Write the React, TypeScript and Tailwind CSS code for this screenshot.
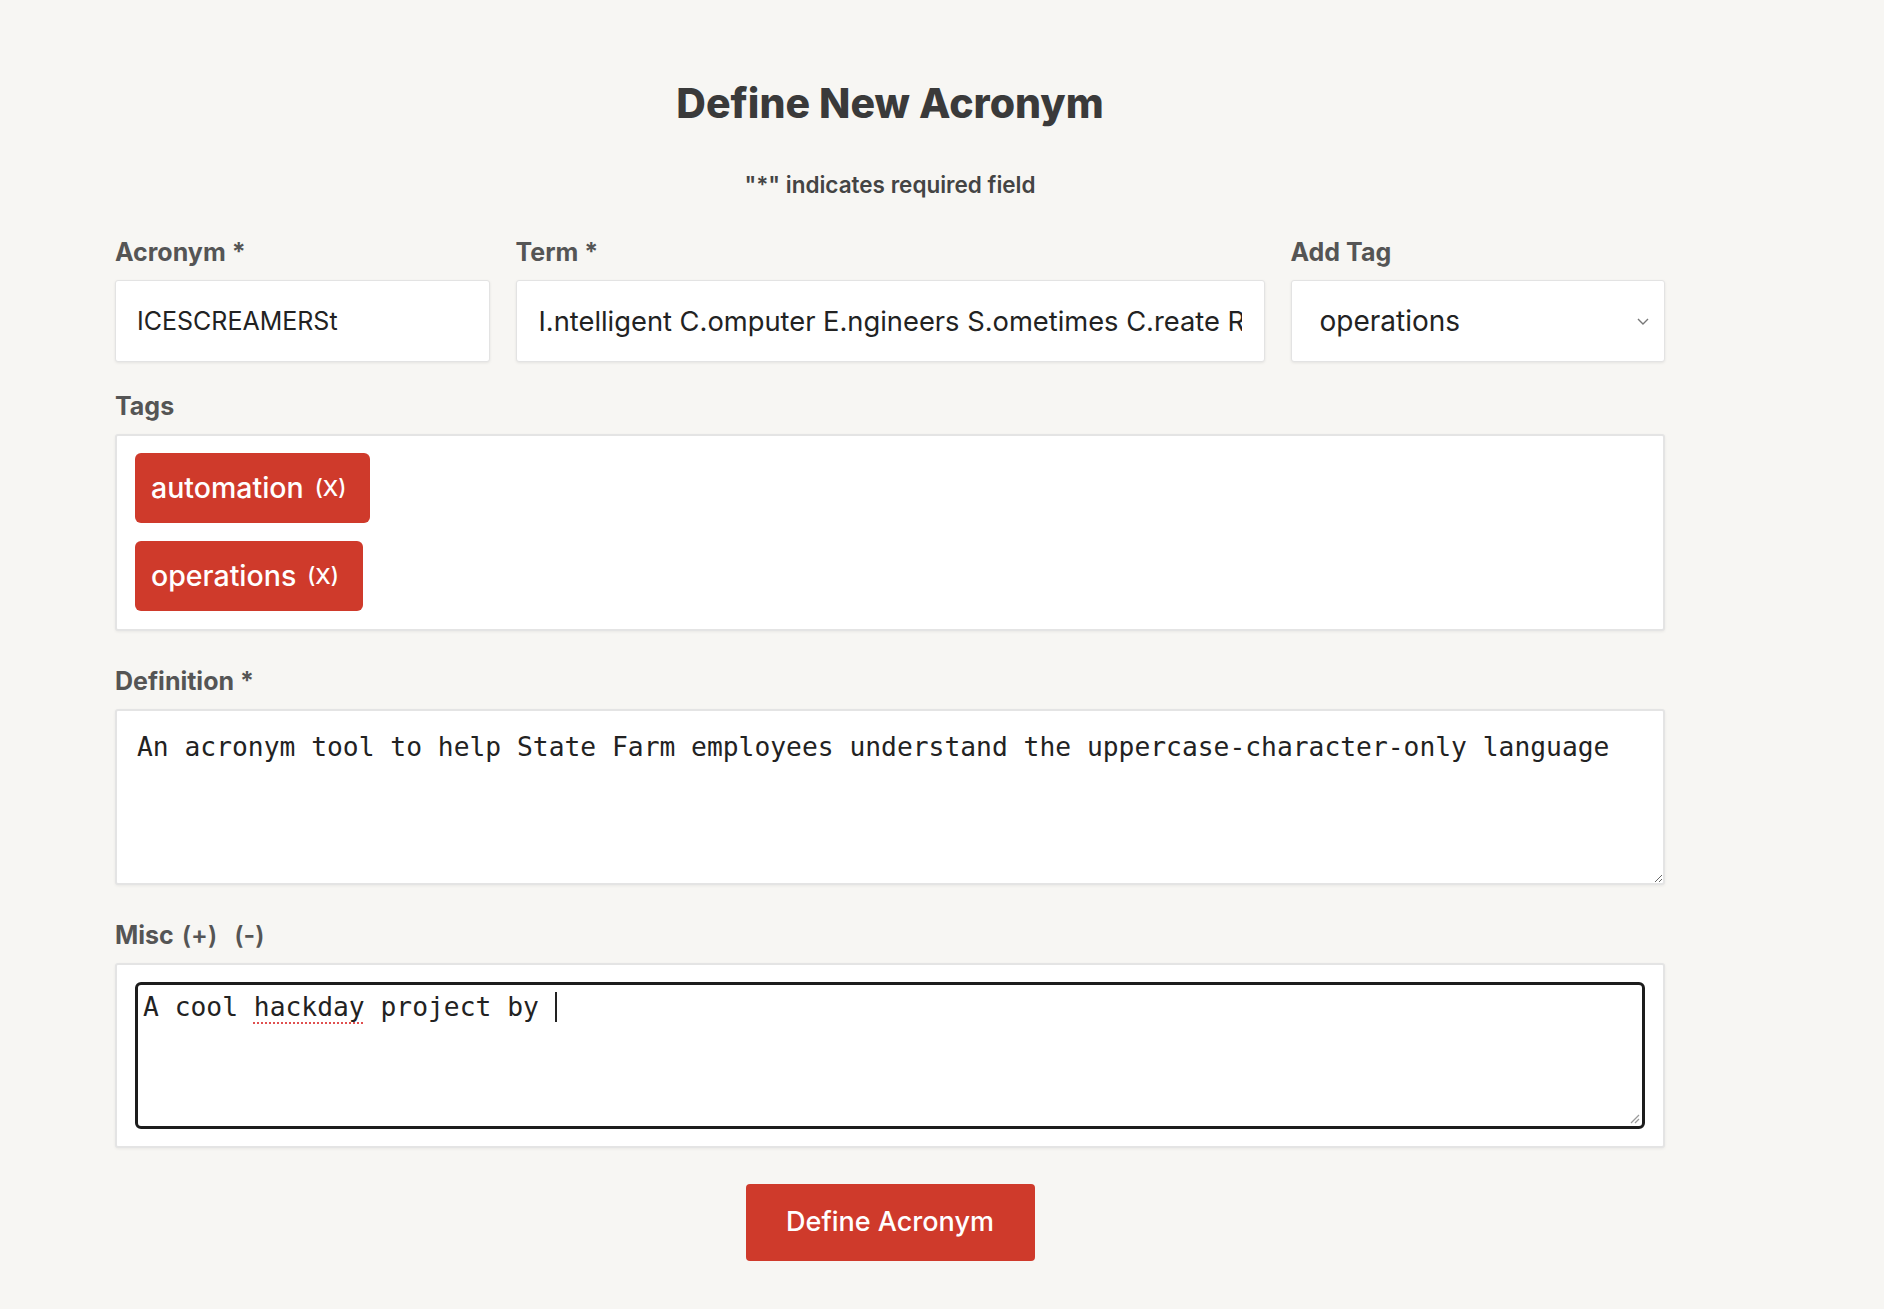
import { useState } from 'react';

const sans = { fontFamily: 'Inter, "Noto Sans", sans-serif' };
const mono = { fontFamily: '"DejaVu Sans Mono", monospace' };

function Label({ children }: { children: React.ReactNode }) {
  return (
    <div className="mb-[14px] text-[25px] leading-[28px] font-bold text-[#555555]">{children}</div>
  );
}

function Chip({ name }: { name: string }) {
  return (
    <div className="flex w-fit items-center rounded-[6px] bg-[#cf3a2b] h-[70px] pl-[16px] pr-[24px] text-white">
      <span className="text-[28.5px] font-medium">{name}</span>
      <span className="ml-[11px] text-[22px] font-medium">(X)</span>
    </div>
  );
}

export default function App() {
  const [tags] = useState<string[]>(['automation', 'operations']);

  return (
    <div className="min-h-[1309px] w-full bg-[#f7f6f3] text-[#333333]" style={sans}>
      <div className="ml-[115px] w-[1550px] pt-[77px]">
        <h1 className="text-center text-[41px] leading-[52px] font-extrabold text-[#3a3a3a]">Define New Acronym</h1>
        <p className="mt-[43px] text-center text-[22.5px] leading-[26px] font-semibold text-[#444444]">
          "*" indicates required field
        </p>

        <div className="mt-[40px] grid grid-cols-[1fr_2fr_1fr] gap-x-[26px]">
          <div>
            <Label>Acronym *</Label>
            <input
              readOnly
              value="ICESCREAMERSt"
              className="h-[82px] w-full rounded-[3px] border border-[#e3e3e3] bg-white px-[21px] text-[25px] text-[#222222] shadow-[0_1px_3px_rgba(0,0,0,0.08)] outline-none"
            />
          </div>
          <div>
            <Label>Term *</Label>
            <input
              readOnly
              value="I.ntelligent C.omputer E.ngineers S.ometimes C.reate R"
              className="h-[82px] w-full rounded-[3px] border border-[#e3e3e3] bg-white px-[22px] text-[27.3px] text-[#222222] shadow-[0_1px_3px_rgba(0,0,0,0.08)] outline-none"
            />
          </div>
          <div>
            <Label>Add Tag</Label>
            <div className="flex h-[82px] items-center justify-between rounded-[3px] border border-[#e3e3e3] bg-white pl-[28px] pr-[14px] shadow-[0_1px_3px_rgba(0,0,0,0.08)]">
              <span className="text-[28px] text-[#222222]">operations</span>
              <svg width="14" height="10" viewBox="0 0 14 10" fill="none" stroke="#777777" strokeWidth="1.4">
                <path d="M2 3l5 5 5-5" />
              </svg>
            </div>
          </div>
        </div>

        <div className="mt-[30px]">
          <Label>Tags</Label>
          <div className="flex h-[197px] flex-col gap-[18px] rounded-[3px] border-2 border-[#e4e4e4] bg-white px-[18px] pt-[17px] shadow-[0_1px_3px_rgba(0,0,0,0.06)]">
            {tags.map((t) => (
              <Chip key={t} name={t} />
            ))}
          </div>
        </div>

        <div className="mt-[36px]">
          <Label>Definition *</Label>
          <textarea
            readOnly
            value="An acronym tool to help State Farm employees understand the uppercase-character-only language"
            className="block h-[176px] w-full resize-y rounded-[3px] border-2 border-[#e4e4e4] bg-white px-[20px] pt-[19px] pb-[20px] text-[26.3px] leading-[34px] text-[#222222] shadow-[0_1px_3px_rgba(0,0,0,0.06)] outline-none"
            style={mono}
          />
        </div>

        <div className="mt-[36px]">
          <div className="mb-[14px] flex text-[25px] leading-[28px] font-bold text-[#555555]">
            <span>Misc</span>
            <span className="ml-[8px] font-semibold">(+)</span>
            <span className="ml-[17px] font-semibold">(-)</span>
          </div>
          <div className="rounded-[3px] border-2 border-[#e4e4e4] bg-white px-[18px] py-[17px] shadow-[0_1px_3px_rgba(0,0,0,0.06)]">
            <div
              className="flex h-[147px] flex-col justify-between rounded-[6px] border-[3px] border-[#1c1c1c] pl-[5px] pr-[2px] pb-[2px] pt-[5px] text-[26.3px] leading-[34px] text-[#222222]"
              style={mono}
            >
              <div className="flex items-center whitespace-pre">
                <span>A cool </span>
                <span className="underline decoration-dotted decoration-[#e05050] decoration-[2px] underline-offset-[6px]">hackday</span>
                <span> project by </span>
                <span className="inline-block h-[30px] w-[2px] bg-[#222222]" />
              </div>
              <svg className="self-end" width="12" height="12" viewBox="0 0 12 12" stroke="#9a9a9a" strokeWidth="1.2">
                <path d="M11 3L3 11M11 7L7 11" />
              </svg>
            </div>
          </div>
        </div>

        <div className="mt-[36px] flex justify-center">
          <button className="h-[77px] w-[289px] rounded-[4px] bg-[#cf3a2b] text-[27px] font-medium text-white">
            Define Acronym
          </button>
        </div>
      </div>
    </div>
  );
}
